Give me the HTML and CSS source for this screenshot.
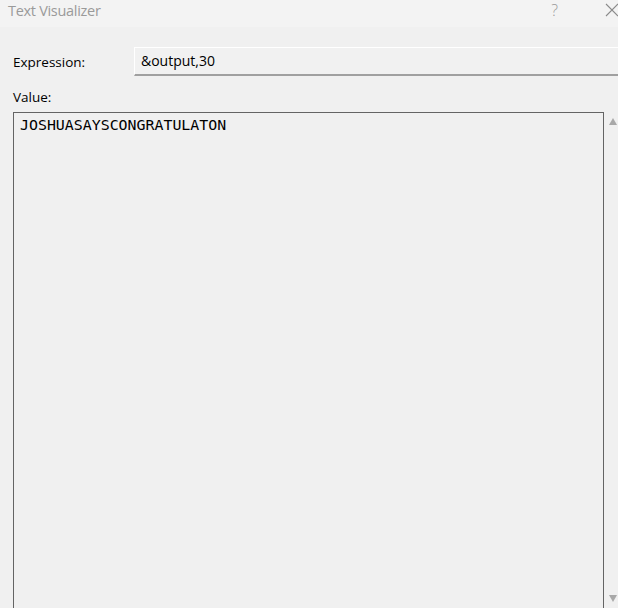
FILE: index.html
```html
<!DOCTYPE html>
<html>
<head>
<meta charset="utf-8">
<link rel="stylesheet" href="styles.css">
</head>
<body>
<div class="window">
  <div class="titlebar">
    <span class="title">Text Visualizer</span>
    <div class="controls">
      <span class="help">?</span>
      <svg class="close" width="14" height="14" viewBox="0 0 14 14"><path d="M1 1L13 13M13 1L1 13" stroke="#8a8a8a" stroke-width="1.1" fill="none"/></svg>
    </div>
  </div>
  <div class="content">
    <div class="row">
      <label class="label expr-label">Expression:</label>
      <div class="input">&amp;output,30</div>
    </div>
    <div class="label value-label">Value:</div>
    <div class="value-row">
      <div class="textarea">JOSHUASAYSCONGRATULATON</div>
      <div class="scrollbar">
        <svg width="8" height="7" viewBox="0 0 8 7"><path d="M0 7L4 0L8 7Z" fill="#a8a8a8"/></svg>
        <svg width="8" height="7" viewBox="0 0 8 7"><path d="M0 0L4 7L8 0Z" fill="#a8a8a8"/></svg>
      </div>
    </div>
  </div>
</div>
</body>
</html>
```
FILE: styles.css
```css
html, body {
  margin: 0;
  padding: 0;
  background: #f0f0f0;
  overflow: hidden;
}
.window {
  width: 618px;
  height: 608px;
  display: flex;
  flex-direction: column;
  font-family: "Open Sans", "Noto Sans", sans-serif;
}
.titlebar {
  height: 27px;
  background: #f3f3f3;
  display: flex;
  align-items: center;
  justify-content: space-between;
  flex-shrink: 0;
}
.title {
  margin-left: 8px;
  margin-top: -7px;
  font-size: 14.5px;
  letter-spacing: -0.3px;
  color: #9a9a9a;
}
.controls {
  display: flex;
  align-items: center;
  margin-top: -8px;
}
.help {
  font-size: 16px;
  font-weight: 300;
  color: #9a9a9a;
  margin-right: 47px;
}
.close {
  margin-right: -1px;
}
.content {
  flex: 1;
  display: flex;
  flex-direction: column;
  padding-left: 13px;
}
.row {
  display: flex;
  align-items: center;
  margin-top: 20px;
}
.label {
  font-size: 13.5px;
  color: #000;
}
.expr-label {
  width: 121px;
}
.input {
  flex: 1;
  height: 29px;
  box-sizing: border-box;
  border-top: 1px solid #ffffff;
  border-left: 1px solid #ffffff;
  border-bottom: 2px solid #a0a0a0;
  background: #f1f1f1;
  font-size: 14px;
  padding-left: 6px;
  line-height: 25px;
}
.value-label {
  margin-top: 11px;
  line-height: 20px;
}
.value-row {
  display: flex;
  margin-top: 5px;
  flex: 1;
}
.textarea {
  width: 591px;
  box-sizing: border-box;
  border: 1px solid #646464;
  border-bottom: none;
  font-family: "DejaVu Sans Mono", "Liberation Mono", monospace;
  font-size: 14.9px;
  padding: 3px 0 0 6px;
  color: #000;
}
.scrollbar {
  flex: 1;
  display: flex;
  flex-direction: column;
  justify-content: space-between;
  align-items: flex-end;
  padding: 6px 1px 6px 0;
}
```
